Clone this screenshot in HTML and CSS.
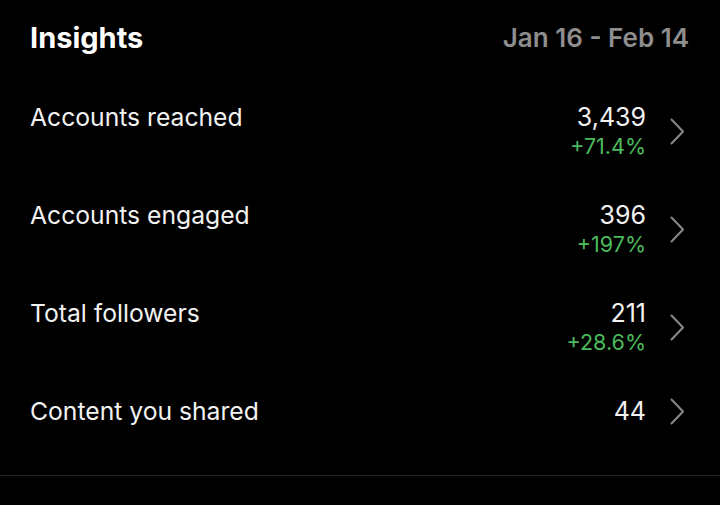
FILE: index.html
```html
<!DOCTYPE html>
<html>
<head>
<meta charset="utf-8">
<link rel="stylesheet" href="styles.css">
</head>
<body>
<div class="page">
  <header class="header">
    <h1 class="title">Insights</h1>
    <span class="range">Jan 16 - Feb 14</span>
  </header>
  <ul class="list">
    <li class="row">
      <span class="label">Accounts reached</span>
      <div class="right">
        <div class="values"><span class="num">3,439</span><span class="pct">+71.4%</span></div>
        <svg class="chev" width="16" height="27" viewBox="0 0 16 27"><polyline points="2.5,1.5 14,13.5 2.5,25.5" fill="none" stroke="#8a8a8a" stroke-width="2" stroke-linecap="round" stroke-linejoin="round"/></svg>
      </div>
    </li>
    <li class="row">
      <span class="label">Accounts engaged</span>
      <div class="right">
        <div class="values"><span class="num">396</span><span class="pct">+197%</span></div>
        <svg class="chev" width="16" height="27" viewBox="0 0 16 27"><polyline points="2.5,1.5 14,13.5 2.5,25.5" fill="none" stroke="#8a8a8a" stroke-width="2" stroke-linecap="round" stroke-linejoin="round"/></svg>
      </div>
    </li>
    <li class="row">
      <span class="label">Total followers</span>
      <div class="right">
        <div class="values"><span class="num">211</span><span class="pct">+28.6%</span></div>
        <svg class="chev" width="16" height="27" viewBox="0 0 16 27"><polyline points="2.5,1.5 14,13.5 2.5,25.5" fill="none" stroke="#8a8a8a" stroke-width="2" stroke-linecap="round" stroke-linejoin="round"/></svg>
      </div>
    </li>
    <li class="row last">
      <span class="label">Content you shared</span>
      <div class="right">
        <div class="values"><span class="num">44</span></div>
        <svg class="chev" width="16" height="27" viewBox="0 0 16 27"><polyline points="2.5,1.5 14,13.5 2.5,25.5" fill="none" stroke="#8a8a8a" stroke-width="2" stroke-linecap="round" stroke-linejoin="round"/></svg>
      </div>
    </li>
  </ul>
</div>
</body>
</html>
```
FILE: styles.css
```css
html, body {
  margin: 0;
  padding: 0;
  background: #000;
}
body {
  width: 720px;
  height: 505px;
  overflow: hidden;
  font-family: Inter, "Noto Sans", sans-serif;
  color: #f2f2f2;
}
.page {
  display: flex;
  flex-direction: column;
}
.header {
  display: flex;
  justify-content: space-between;
  align-items: center;
  padding: 21px 31px 0 30px;
  height: 34px;
}
.title {
  margin: 0;
  font-size: 29px;
  font-weight: 700;
  line-height: 34px;
  color: #fff;
}
.range {
  font-size: 26px;
  font-weight: 600;
  color: #8e8e8e;
  line-height: 34px;
}
.list {
  list-style: none;
  margin: 47px 0 0 0;
  padding: 0 35px 0 30px;
  display: flex;
  flex-direction: column;
  gap: 40px;
  border-bottom: 1px solid #262626;
}
.row {
  display: flex;
  justify-content: space-between;
  align-items: flex-start;
}
.row.last {
  padding-bottom: 49px;
}
.label {
  font-size: 24.7px;
  line-height: 30px;
}
.right {
  display: flex;
  align-items: center;
  gap: 23px;
}
.values {
  display: flex;
  flex-direction: column;
  align-items: flex-end;
}
.num {
  font-size: 25px;
  line-height: 30px;
}
.pct {
  font-size: 21.5px;
  line-height: 28px;
  color: #4cbb5c;
}
.chev {
  display: block;
}
```
